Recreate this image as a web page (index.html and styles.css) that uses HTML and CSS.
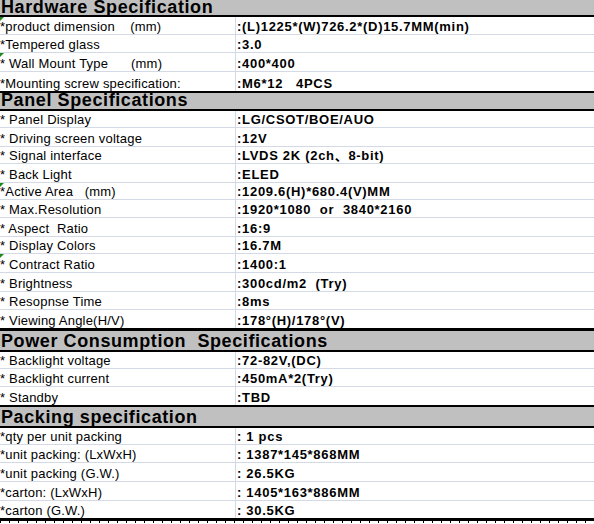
FILE: index.html
```html
<!DOCTYPE html>
<html>
<head>
<meta charset="utf-8">
<link rel="stylesheet" href="styles.css">
</head>
<body>
<div class="sheet">
  <div class="head h15"><span>Hardware Specification</span></div>
  <div class="bar"></div>
  <div class="block">
    <div class="row r18 flag"><div class="k">*product dimension    (mm)</div><div class="v">:(L)1225*(W)726.2*(D)15.7MM(min)</div></div>
    <div class="row r18"><div class="k">*Tempered glass</div><div class="v">:3.0</div></div>
    <div class="row r19 flag"><div class="k">* Wall Mount Type      (mm)</div><div class="v">:400*400</div></div>
    <div class="row r19"><div class="k">*Mounting screw specification:</div><div class="v">:M6*12   4PCS</div></div>
  </div>
  <div class="bar"></div>
  <div class="head h16"><span>Panel Specifications</span></div>
  <div class="bar"></div>
  <div class="block">
    <div class="row r17"><div class="k">* Panel Display</div><div class="v">:LG/CSOT/BOE/AUO</div></div>
    <div class="row r19"><div class="k">* Driving screen voltage</div><div class="v">:12V</div></div>
    <div class="row r17"><div class="k">* Signal interface</div><div class="v">:LVDS 2K (2ch、8-bit)</div></div>
    <div class="row r19"><div class="k">* Back Light</div><div class="v">:ELED</div></div>
    <div class="row r17 flag"><div class="k">*Active Area   (mm)</div><div class="v">:1209.6(H)*680.4(V)MM</div></div>
    <div class="row r18"><div class="k">* Max.Resolution</div><div class="v">:1920*1080  or  3840*2160</div></div>
    <div class="row r19"><div class="k">* Aspect  Ratio</div><div class="v">:16:9</div></div>
    <div class="row r17"><div class="k">* Display Colors</div><div class="v">:16.7M</div></div>
    <div class="row r19 flag"><div class="k">* Contract Ratio</div><div class="v">:1400:1</div></div>
    <div class="row r19"><div class="k">* Brightness</div><div class="v">:300cd/m2  (Try)</div></div>
    <div class="row r18"><div class="k">* Resopnse Time</div><div class="v">:8ms</div></div>
    <div class="row r18"><div class="k">* Viewing Angle(H/V)</div><div class="v">:178°(H)/178°(V)</div></div>
  </div>
  <div class="bar b3"></div>
  <div class="head h19"><span>Power Consumption  Specifications</span></div>
  <div class="bar"></div>
  <div class="block">
    <div class="row r17"><div class="k">* Backlight voltage</div><div class="v">:72-82V,(DC)</div></div>
    <div class="row r18"><div class="k">* Backlight current</div><div class="v">:450mA*2(Try)</div></div>
    <div class="row r18"><div class="k">* Standby</div><div class="v">:TBD</div></div>
  </div>
  <div class="bar"></div>
  <div class="head h19"><span>Packing specification</span></div>
  <div class="bar"></div>
  <div class="block">
    <div class="row r17"><div class="k">*qty per unit packing</div><div class="v">: 1 pcs</div></div>
    <div class="row r18"><div class="k">*unit packing: (LxWxH)</div><div class="v">: 1387*145*868MM</div></div>
    <div class="row r19"><div class="k">*unit packing (G.W.)</div><div class="v">: 26.5KG</div></div>
    <div class="row r19"><div class="k">*carton: (LxWxH)</div><div class="v">: 1405*163*886MM</div></div>
    <div class="row r17"><div class="k">*carton (G.W.)</div><div class="v">: 30.5KG</div></div>
  </div>
  <div class="bar"></div>
  <div class="pagebreak"></div>
</div>
</body>
</html>
```
FILE: styles.css
```css
html, body {
  margin: 0;
  padding: 0;
  background: #ffffff;
}
.sheet {
  width: 594px;
  font-family: "Liberation Sans", Arial, "Noto Sans CJK SC", sans-serif;
  color: #000;
}
.head {
  background: #c0c0c0;
  display: flex;
  align-items: flex-end;
  overflow: hidden;
  font-size: 18px;
  font-weight: bold;
  letter-spacing: 0.6px;
  line-height: 19px;
  white-space: pre;
  padding-left: 1px;
}
.h15 { height: 15px; }
.h16 { height: 16px; }
.h19 { height: 19px; }
.head span { display: block; margin-bottom: -1px; }
.h15 span { margin-bottom: -2px; }
.bar {
  height: 2px;
  background: #000;
  position: relative;
}
.bar.b3 { height: 3px; }
.block { display: flex; flex-direction: column; }
.row {
  position: relative;
  display: flex;
  box-sizing: border-box;
  border-bottom: 1px solid #d3d9e5;
}
.row:last-child { border-bottom: none; }
.r17 { height: 17px; }
.r18 { height: 18px; }
.r19 { height: 19px; }
.r20 { height: 20px; }
.k, .v {
  display: flex;
  align-items: flex-end;
  white-space: pre;
  line-height: 15px;
  overflow: hidden;
}
.k {
  width: 235px;
  flex: none;
  font-size: 13px;
  letter-spacing: 0.2px;
  border-right: 1px solid #d3d9e5;
}
.v {
  flex: 1;
  font-size: 13px;
  font-weight: bold;
  letter-spacing: 0.7px;
  padding-left: 1px;
}
.flag::before {
  content: "";
  position: absolute;
  left: 0;
  top: 0;
  width: 0;
  height: 0;
  border-top: 4px solid #1a8a1a;
  border-right: 4px solid transparent;
}
.pagebreak {
  height: 3px;
  background: repeating-linear-gradient(90deg, #000 0 1px, #ffffff 1px 9px);
  border-top: 1px solid #000;
  box-sizing: border-box;
}
```
